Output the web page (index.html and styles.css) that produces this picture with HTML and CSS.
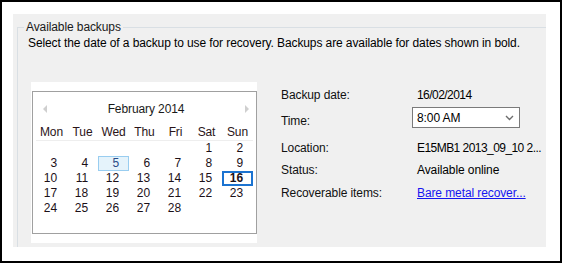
FILE: index.html
```html
<!DOCTYPE html>
<html lang="en">
<head>
    <meta charset="UTF-8">
    <title>Available backups</title>
    <link rel="stylesheet" href="styles.css">
</head>
<body>
    <div class="frame">
        <div class="panel">
            <fieldset class="group">
                <legend>Available backups</legend>
                <p class="hint">Select the date of a backup to use for recovery. Backups are available for dates shown in bold.</p>

                <div class="content">
                    <div class="cal-wrap">
                        <div class="calendar">
                            <div class="cal-head">
                                <span class="nav nav-prev"></span>
                                <span class="month">February 2014</span>
                                <span class="nav nav-next"></span>
                            </div>
                            <div class="weekdays">
                                <span>Mon</span><span>Tue</span><span>Wed</span><span>Thu</span><span>Fri</span><span>Sat</span><span>Sun</span>
                            </div>
                            <div class="days" id="days"></div>
                        </div>
                    </div>

                    <div class="details">
                        <span class="label">Backup date:</span>
                        <span class="value num">16/02/2014</span>

                        <span class="label label-time">Time:</span>
                        <div class="dropdown">
                            <span>8:00 AM</span>
                            <svg width="9" height="6" viewBox="0 0 9 6"><path d="M1 1 L4.5 4.5 L8 1" fill="none" stroke="#6d6d6d" stroke-width="1.4"/></svg>
                        </div>

                        <span class="label">Location:</span>
                        <span class="value num">E15MB1 2013_09_10 2...</span>

                        <span class="label">Status:</span>
                        <span class="value">Available online</span>

                        <span class="label">Recoverable items:</span>
                        <span class="value"><a href="#">Bare metal recover...</a></span>
                    </div>
                </div>
            </fieldset>
        </div>
    </div>

    <script>
        // February 2014 starts on a Saturday (Mon-first grid)
        const days = document.getElementById('days');
        const offset = 5;
        for (let i = 0; i < offset; i++) {
            days.appendChild(document.createElement('span'));
        }
        for (let d = 1; d <= 28; d++) {
            const cell = document.createElement('span');
            cell.textContent = d;
            if (d === 5) cell.className = 'hover';
            if (d === 16) cell.className = 'selected';
            days.appendChild(cell);
        }
    </script>
</body>
</html>
```

FILE: styles.css
```css
body {
    margin: 0;
    font-family: "Liberation Sans", Arial, sans-serif;
    font-size: 12px;
    line-height: 16px;
    letter-spacing: -0.1px;
    color: #000;
}
.frame {
    width: 562px;
    height: 263px;
    box-sizing: border-box;
    border: 2px solid #000;
    background: #fff;
    padding: 12px 14px 14px 11px;
}
.panel {
    height: 100%;
    background: #f0f0f0;
    overflow: hidden;
    padding: 5px 0 0 4px;
    box-sizing: border-box;
}
.group {
    margin: 0;
    padding: 0;
    border: 1px solid #d9dfe4;
    border-right: none;
    border-bottom: none;
    min-width: 0;
    height: 300px;
}
.group legend {
    margin-left: 6px;
    padding: 0 2px;
    color: #1a1a1a;
}
.hint {
    margin: 0 0 0 10px;
}
.content {
    display: flex;
    margin: 31px 0 0 10px;
}
.cal-wrap {
    width: 227px;
    height: 161px;
    background: #fff;
    margin-left: 3px;
    padding: 9px 0 0 1px;
    box-sizing: border-box;
}
.calendar {
    width: 225px;
    height: 143px;
    box-sizing: border-box;
    border: 1px solid #a0a0a0;
    padding: 9px 0 0 3px;
}
.cal-head {
    display: flex;
    justify-content: space-between;
    align-items: center;
    padding: 0 7px 0 7px;
}
.month {
    color: #1a1a1a;
}
.nav {
    width: 0;
    height: 0;
    border-top: 4px solid transparent;
    border-bottom: 4px solid transparent;
}
.nav-prev {
    border-right: 4px solid #cfcfcf;
}
.nav-next {
    border-left: 4px solid #cfcfcf;
}
.weekdays {
    display: grid;
    grid-template-columns: repeat(7, 31px);
    margin-top: 8px;
    height: 15px;
    border-bottom: 1px solid #eeeeee;
    margin-right: 3px;
    color: #2a1418;
}
.weekdays span {
    text-align: center;
    line-height: 15px;
}
.days {
    display: grid;
    grid-template-columns: repeat(7, 31px);
    grid-auto-rows: 15px;
    color: #1c1018;
}
.days span {
    text-align: right;
    padding-right: 10px;
    line-height: 15px;
    box-sizing: border-box;
}
.days .hover {
    background: #e5f3fb;
    border: 1px solid #99cdf0;
    line-height: 13px;
    padding-right: 9px;
    color: #2b4a86;
}
.days .selected {
    border: 2px solid #1b73d1;
    font-weight: bold;
    line-height: 11px;
    padding-right: 8px;
}
.details {
    display: grid;
    grid-template-columns: 131px 140px;
    grid-template-rows: 21px 32px 22px 23px 16px;
    align-items: start;
    margin-left: 24px;
    padding-top: 5px;
}
.label {
    color: #111;
}
.label-time {
    margin-top: 5px;
}
.value {
    padding-left: 5px;
    white-space: nowrap;
}
.num {
    letter-spacing: -0.55px;
}
.dropdown {
    width: 108px;
    height: 21px;
    box-sizing: border-box;
    border: 1px solid #7a7a7a;
    background: #fff;
    display: flex;
    align-items: center;
    justify-content: space-between;
    padding: 0 5px 0 4px;
    margin-top: -1px;
}
.value a {
    color: #1515f0;
}
```
